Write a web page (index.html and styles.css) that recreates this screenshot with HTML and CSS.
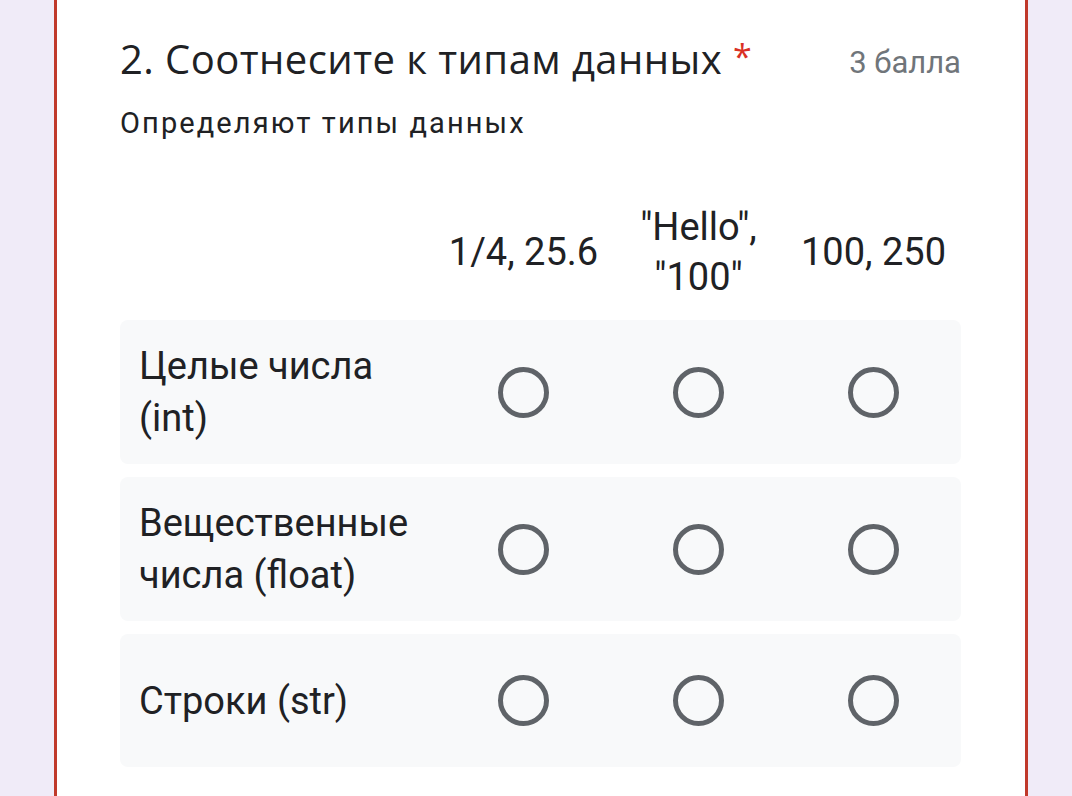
FILE: index.html
```html
<!DOCTYPE html>
<html lang="ru">
<head>
<meta charset="utf-8">
<link rel="stylesheet" href="styles.css">
</head>
<body>
<div class="card">
  <div class="head">
    <div class="title">2. Соотнесите к типам данных <span class="req">*</span></div>
    <div class="points">3 балла</div>
  </div>
  <div class="desc">Определяют типы данных</div>
  <div class="grid">
    <div class="ghead">
      <div></div>
      <div class="col">1/4, 25.6</div>
      <div class="col">"Hello",<br>"100"</div>
      <div class="col">100, 250</div>
    </div>
    <div class="grow">
      <div class="label">Целые числа<br>(int)</div>
      <div class="cell"><span class="radio"></span></div>
      <div class="cell"><span class="radio"></span></div>
      <div class="cell"><span class="radio"></span></div>
    </div>
    <div class="grow">
      <div class="label">Вещественные<br>числа (float)</div>
      <div class="cell"><span class="radio"></span></div>
      <div class="cell"><span class="radio"></span></div>
      <div class="cell"><span class="radio"></span></div>
    </div>
    <div class="grow">
      <div class="label">Строки (str)</div>
      <div class="cell"><span class="radio"></span></div>
      <div class="cell"><span class="radio"></span></div>
      <div class="cell"><span class="radio"></span></div>
    </div>
  </div>
</div>
</body>
</html>
```
FILE: styles.css
```css
html, body {
  margin: 0;
  height: 100%;
  overflow: hidden;
}
body {
  background: #f0ebf8;
  font-family: Roboto, "Noto Sans", sans-serif;
  color: #202124;
}
.card {
  margin: 0 44px 0 54px;
  min-height: 100%;
  background: #ffffff;
  border-left: 3px solid #c0392b;
  border-right: 3px solid #c0392b;
  padding: 30px 64px 0 63px;
  box-sizing: border-box;
}
.head {
  display: flex;
  justify-content: space-between;
  align-items: flex-start;
}
.title {
  font-family: "Open Sans", Roboto, sans-serif;
  font-size: 40px;
  line-height: 52px;
  letter-spacing: 0.45px;
  color: #202124;
}
.req {
  color: #d93025;
  font-size: 34px;
  vertical-align: 5px;
}
.points {
  padding-top: 7px;
  font-size: 31px;
  line-height: 52px;
  color: #70757a;
}
.desc {
  margin-top: 14px;
  font-size: 29px;
  line-height: 40px;
  letter-spacing: 2.1px;
}
.grid {
  margin-top: 59px;
  width: 841px;
}
.ghead, .grow {
  display: grid;
  grid-template-columns: 316px repeat(3, 175px);
  align-items: center;
}
.ghead {
  font-size: 38px;
  line-height: 50px;
  margin-bottom: 18px;
}
.col {
  text-align: center;
}
.grow {
  background: #f8f9fa;
  border-radius: 8px;
  min-height: 133px;
  padding: 20px 0;
  box-sizing: border-box;
  margin-bottom: 13px;
  font-size: 38px;
  line-height: 52px;
}
.label {
  padding-left: 19px;
}
.cell {
  display: flex;
  justify-content: center;
}
.radio {
  width: 41px;
  height: 41px;
  border: 5px solid #5f6368;
  border-radius: 50%;
}
```
